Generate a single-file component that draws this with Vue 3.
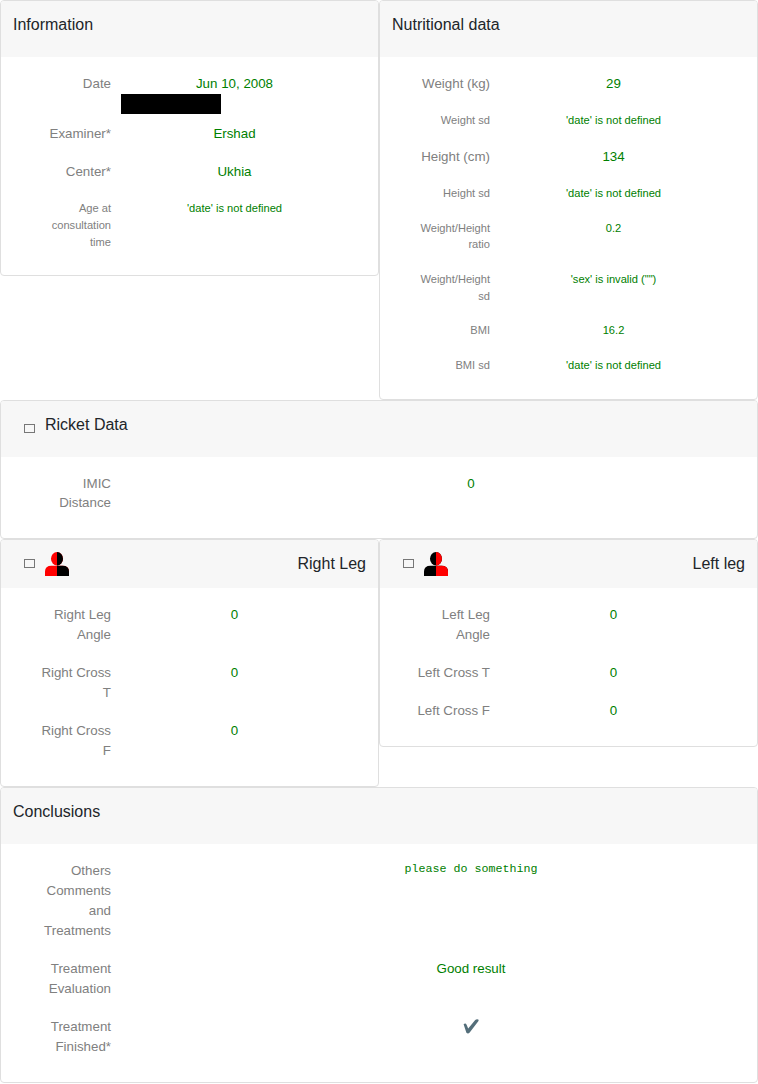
<script setup>
const info = [
  { label: 'Date', value: 'Jun 10, 2008', redacted: true },
  { label: 'Examiner*', value: 'Ershad' },
  { label: 'Center*', value: 'Ukhia' },
  { label: 'Age at consultation time', value: "'date' is not defined", small: true },
]
const nutrition = [
  { label: 'Weight (kg)', value: '29' },
  { label: 'Weight sd', value: "'date' is not defined", small: true },
  { label: 'Height (cm)', value: '134' },
  { label: 'Height sd', value: "'date' is not defined", small: true },
  { label: 'Weight/Height ratio', value: '0.2', small: true },
  { label: 'Weight/Height sd', value: "'sex' is invalid (\"\")", small: true },
  { label: 'BMI', value: '16.2', small: true },
  { label: 'BMI sd', value: "'date' is not defined", small: true },
]
const legs = [
  {
    title: 'Right Leg',
    side: 'right',
    rows: [
      { label: 'Right Leg Angle', value: '0' },
      { label: 'Right Cross T', value: '0' },
      { label: 'Right Cross F', value: '0' },
    ],
  },
  {
    title: 'Left leg',
    side: 'left',
    rows: [
      { label: 'Left Leg Angle', value: '0' },
      { label: 'Left Cross T', value: '0' },
      { label: 'Left Cross F', value: '0' },
    ],
  },
]
</script>

<template>
  <main class="page">
    <div class="pair top">
      <section class="card">
        <header class="head"><h2>Information</h2></header>
        <div class="body">
          <div v-for="r in info" :key="r.label" class="row" :class="{ small: r.small, tight: r.redacted }">
            <div class="label">{{ r.label }}</div>
            <div class="value">{{ r.value }}<div v-if="r.redacted" class="redacted"></div></div>
          </div>
        </div>
      </section>
      <section class="card nutrition">
        <header class="head"><h2>Nutritional data</h2></header>
        <div class="body">
          <div v-for="r in nutrition" :key="r.label" class="row" :class="{ small: r.small }">
            <div class="label">{{ r.label }}</div>
            <div class="value">{{ r.value }}</div>
          </div>
        </div>
      </section>
    </div>

    <section class="card wide ricket">
      <header class="head"><i class="box low"></i><h2>Ricket Data</h2></header>
      <div class="body">
        <div class="row">
          <div class="label">IMIC Distance</div>
          <div class="value">0</div>
        </div>
      </div>
    </section>

    <div class="pair">
      <section v-for="leg in legs" :key="leg.side" class="card">
        <header class="head short">
          <i class="box"></i>
          <svg class="person" :class="leg.side" viewBox="0 0 24 24">
            <defs>
              <clipPath :id="'half-' + leg.side"><rect x="12" y="0" width="12" height="24" /></clipPath>
            </defs>
            <g class="base">
              <ellipse cx="12" cy="6.8" rx="6" ry="6.8" />
              <path d="M0 24v-4.5q0-5.8 6.5-5.8h11q6.5 0 6.5 5.8v4.5z" />
            </g>
            <g class="half" :clip-path="`url(#half-${leg.side})`">
              <ellipse cx="12" cy="6.8" rx="6" ry="6.8" />
              <path d="M0 24v-4.5q0-5.8 6.5-5.8h11q6.5 0 6.5 5.8v4.5z" />
            </g>
          </svg>
          <h2 class="end">{{ leg.title }}</h2>
        </header>
        <div class="body">
          <div v-for="r in leg.rows" :key="r.label" class="row">
            <div class="label">{{ r.label }}</div>
            <div class="value">{{ r.value }}</div>
          </div>
        </div>
      </section>
    </div>

    <section class="card wide">
      <header class="head"><h2>Conclusions</h2></header>
      <div class="body">
        <div class="row">
          <div class="label">Others Comments and Treatments</div>
          <div class="value mono">please do something</div>
        </div>
        <div class="row">
          <div class="label">Treatment Evaluation</div>
          <div class="value">Good result</div>
        </div>
        <div class="row">
          <div class="label">Treatment Finished*</div>
          <div class="value">
            <svg class="check" viewBox="0 0 16 16">
              <path d="M0.6 5.2Q2.6 3.6 3.6 5.8L5.2 9.4L12.2 1.1Q13.7 -0.1 15.2 0.6Q16 1.2 15.3 2.2L6.7 13.4Q5.2 15.2 3.4 13.8Z" />
            </svg>
          </div>
        </div>
      </div>
    </section>
  </main>
</template>

<style>
body { background: #fff; }
</style>

<style scoped>
.page {
  width: 758px;
  font-family: "Liberation Sans", Arial, sans-serif;
  font-size: 13.333px;
  line-height: 20px;
  color: #212529;
}
.page * { box-sizing: border-box; }
.pair {
  display: grid;
  grid-template-columns: 379px 379px;
  align-items: start;
}
.top { height: 400px; }
.nutrition { height: 400px; }
.card {
  border: 1px solid #dfdfdf;
  border-radius: 4px;
  overflow: hidden;
}
.head {
  display: flex;
  height: 56px;
  padding: 12px;
  background: #f7f7f7;
}
.short { height: 48px; }
h2 {
  margin: 0;
  font-size: 16px;
  line-height: 24px;
  font-weight: 400;
}
.end { margin-left: auto; }
.body { padding: 8px 0 16px; }
.row {
  display: flex;
  gap: 10px;
  padding: 9px 0;
}
.label {
  width: 76px;
  margin-left: 34px;
  flex: none;
  text-align: right;
  color: #808080;
}
.value {
  width: 227px;
  text-align: center;
  color: #008000;
}
.wide .value {
  flex: 1;
  width: auto;
  padding-left: 64px;
}
.small {
  font-size: 11.111px;
  line-height: 16.766px;
}
.nutrition .small:nth-child(6) { padding-bottom: 8.7px; }
.ricket .row {
  padding: 9px 0 10px;
  line-height: 19px;
}
.redacted {
  width: 100px;
  height: 20px;
  background: #000;
}
.tight { padding-bottom: 1px; }
.wide .mono {
  font-family: "Liberation Mono", monospace;
  font-size: 11.667px;
  line-height: 16px;
}
.box {
  width: 11px;
  height: 9px;
  margin: 7px 10px 0 11px;
  flex: none;
  border: 1px solid #777;
}
.low { margin-top: 11px; }
.person {
  width: 24px;
  height: 24px;
}
.right .base, .left .half { fill: #f00; }
.right .half, .left .base { fill: #000; }
.check {
  display: block;
  width: 16px;
  height: 16px;
  margin: 2px auto 0;
  fill: #546e7a;
}
</style>
